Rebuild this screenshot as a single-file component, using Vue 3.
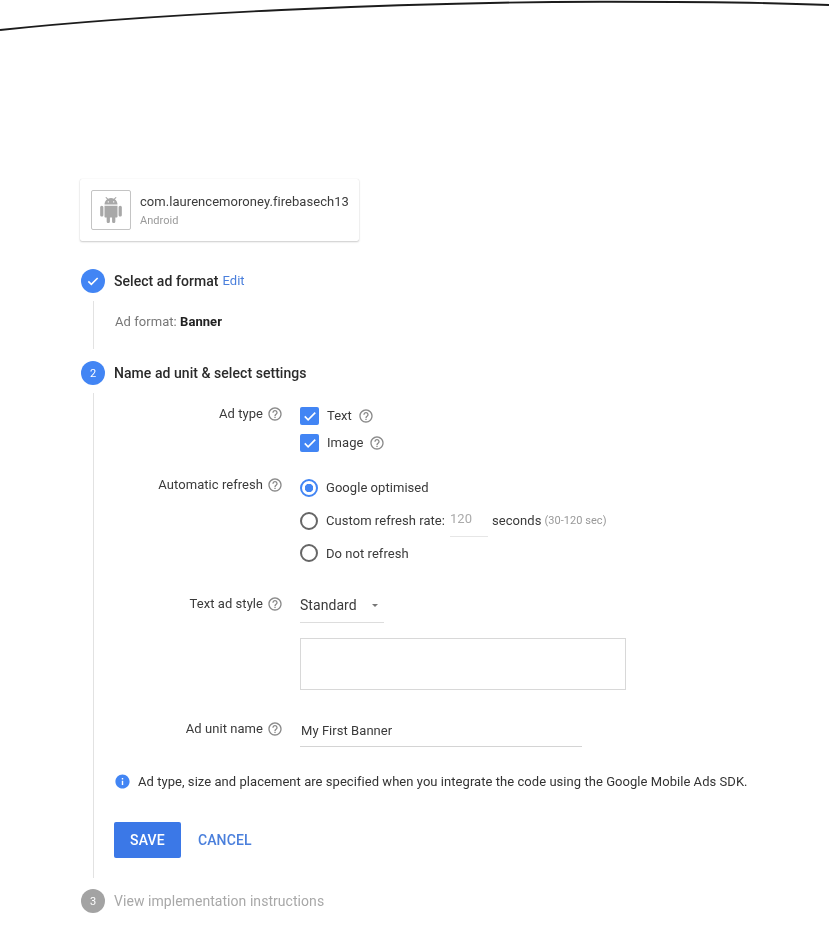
<script setup>
// material icon paths
const helpPath = 'M11 18h2v-2h-2v2zm1-16C6.48 2 2 6.48 2 12s4.48 10 10 10 10-4.48 10-10S17.52 2 12 2zm0 18c-4.41 0-8-3.59-8-8s3.59-8 8-8 8 3.59 8 8-3.59 8-8 8zm0-14c-2.21 0-4 1.79-4 4h2c0-1.1.9-2 2-2s2 .9 2 2c0 2-3 1.75-3 5h2c0-2.25 3-2.5 3-5 0-2.21-1.79-4-4-4z'
const androidPath = 'M6 18c0 .55.45 1 1 1h1v3.5c0 .83.67 1.5 1.5 1.5s1.5-.67 1.5-1.5V19h2v3.5c0 .83.67 1.5 1.5 1.5s1.5-.67 1.5-1.5V19h1c.55 0 1-.45 1-1V8H6v10zM3.5 8C2.67 8 2 8.67 2 9.5v7c0 .83.67 1.5 1.5 1.5S5 17.33 5 16.5v-7C5 8.67 4.33 8 3.5 8zm17 0c-.83 0-1.5.67-1.5 1.5v7c0 .83.67 1.5 1.5 1.5s1.5-.67 1.5-1.5v-7c0-.83-.67-1.5-1.5-1.5zm-4.97-5.84l1.3-1.3c.2-.2.2-.51 0-.71-.2-.2-.51-.2-.71 0l-1.48 1.48C13.85 1.23 12.95 1 12 1c-.96 0-1.86.23-2.66.63L7.85.15c-.2-.2-.51-.2-.71 0-.2.2-.2.51 0 .71l1.31 1.31C6.97 3.26 6 5.01 6 7h12c0-1.99-.97-3.75-2.47-4.84zM10 5H9V4h1v1zm5 0h-1V4h1v1z'
const infoPath = 'M12 2C6.48 2 2 6.48 2 12s4.48 10 10 10 10-4.48 10-10S17.52 2 12 2zm1 15h-2v-6h2v6zm0-8h-2V7h2v2z'
const checkPath = 'M5 12.5l4.5 4.5L19 7.5'
</script>

<template>
  <div class="page">
    <!-- page edge curve -->
    <svg class="curve" width="829" height="179" viewBox="0 0 829 179">
      <path d="M0 30 C150 14 400 2 600 1.7 C700 1.6 780 3 829 5" fill="none" stroke="#1c1c1c" stroke-width="1.9" />
    </svg>

    <div class="app-card">
      <div class="app-icon">
        <svg width="26" height="26" viewBox="0 0 24 24"><path :d="androidPath" fill="#a8a8a8" /></svg>
      </div>
      <div>
        <div class="app-name">com.laurencemoroney.firebasech13</div>
        <div class="app-platform">Android</div>
      </div>
    </div>

    <div class="stepper">
      <div class="step-head">
        <span class="step-num">
          <svg width="16" height="16" viewBox="0 0 24 24"><path :d="checkPath" fill="none" stroke="#fff" stroke-width="2.4" /></svg>
        </span>
        <span class="step-title">Select ad format</span>
        <a class="edit">Edit</a>
      </div>
      <div class="step-body first">
        <span class="format-label">Ad format:</span> <b class="format-value">Banner</b>
      </div>

      <div class="step-head">
        <span class="step-num">2</span>
        <span class="step-title">Name ad unit &amp; select settings</span>
      </div>
      <div class="step-body second">
        <div class="form-row">
          <div class="form-label top">Ad type
            <svg class="help" viewBox="0 0 24 24"><path :d="helpPath" /></svg>
          </div>
          <div>
            <div class="option check-opt">
              <span class="checkbox"><svg width="18" height="18" viewBox="0 0 24 24"><path :d="checkPath" fill="none" stroke="#fff" stroke-width="2.2" /></svg></span>
              <span class="check-text">Text</span>
              <svg class="help" viewBox="0 0 24 24"><path :d="helpPath" /></svg>
            </div>
            <div class="option check-opt">
              <span class="checkbox"><svg width="18" height="18" viewBox="0 0 24 24"><path :d="checkPath" fill="none" stroke="#fff" stroke-width="2.2" /></svg></span>
              <span class="check-text">Image</span>
              <svg class="help" viewBox="0 0 24 24"><path :d="helpPath" /></svg>
            </div>
          </div>
        </div>

        <div class="form-row refresh">
          <div class="form-label">Automatic refresh
            <svg class="help" viewBox="0 0 24 24"><path :d="helpPath" /></svg>
          </div>
          <div>
            <div class="option radio-opt">
              <span class="radio on"></span>
              <span>Google optimised</span>
            </div>
            <div class="option radio-opt">
              <span class="radio"></span>
              <span>Custom refresh rate:</span>
              <span class="rate">120</span>
              <span class="seconds">seconds</span>
              <span class="range">(30-120 sec)</span>
            </div>
            <div class="option radio-opt last">
              <span class="radio"></span>
              <span>Do not refresh</span>
            </div>
          </div>
        </div>

        <div class="form-row style-row">
          <div class="form-label">Text ad style
            <svg class="help" viewBox="0 0 24 24"><path :d="helpPath" /></svg>
          </div>
          <div>
            <div class="select">
              <span>Standard</span>
              <span class="caret"></span>
            </div>
            <div class="preview"></div>
          </div>
        </div>

        <div class="form-row name-row">
          <div class="form-label">Ad unit name
            <svg class="help" viewBox="0 0 24 24"><path :d="helpPath" /></svg>
          </div>
          <div class="name-input">My First Banner</div>
        </div>

        <div class="notice">
          <svg width="17" height="17" viewBox="0 0 24 24"><path :d="infoPath" fill="#4285f4" /></svg>
          <span>Ad type, size and placement are specified when you integrate the code using the Google Mobile Ads SDK.</span>
        </div>

        <div class="actions">
          <button class="save">SAVE</button>
          <a class="cancel">CANCEL</a>
        </div>
      </div>

      <div class="step-head disabled">
        <span class="step-num">3</span>
        <span class="step-title">View implementation instructions</span>
      </div>
    </div>
  </div>
</template>

<style scoped>
.page {
  width: 829px;
  height: 935px;
  overflow: hidden;
  background: #fff;
  font-family: Roboto, "Liberation Sans", sans-serif;
  font-size: 13px;
  letter-spacing: 0.05px;
  color: #333;
  filter: blur(0.4px);
}

.curve {
  display: block;
}

.app-card {
  display: flex;
  align-items: center;
  gap: 9px;
  box-sizing: border-box;
  width: 279px;
  height: 62px;
  margin-left: 80px;
  padding-left: 11px;
  border-radius: 2px;
  box-shadow: 0 1px 2px rgba(0, 0, 0, 0.2), 0 0 1px rgba(0, 0, 0, 0.15);
}

.app-icon {
  display: flex;
  flex: none;
  align-items: center;
  justify-content: center;
  box-sizing: border-box;
  width: 40px;
  height: 40px;
  border: 1px solid #c4c4c4;
  border-radius: 2px;
}

.app-name {
  font-size: 13px;
  line-height: 18px;
  color: #3c3c3c;
}

.app-platform {
  margin-top: 3px;
  font-size: 11px;
  line-height: 14px;
  color: #9a9a9a;
}

.stepper {
  margin-top: 28px;
  margin-left: 81px;
}

.step-head {
  display: flex;
  align-items: center;
  height: 24px;
}

.step-num {
  display: flex;
  align-items: center;
  justify-content: center;
  width: 24px;
  height: 24px;
  margin-right: 9px;
  border-radius: 50%;
  background: #4285f4;
  color: #fff;
  font-size: 11px;
}

.step-title {
  font-size: 14px;
  font-weight: 500;
  color: #2a2a2a;
}

.edit {
  margin-left: 4px;
  color: #4a7fdc;
  font-size: 13px;
  position: relative;
  top: -1px;
}

.disabled .step-num {
  background: #a3a3a3;
}

.disabled .step-title {
  font-weight: 400;
  color: #a8a8a8;
}

.step-body {
  margin-left: 12px;
  border-left: 1.5px solid #e2e2e2;
}

.step-body.first {
  box-sizing: border-box;
  height: 48px;
  margin-top: 8px;
  margin-bottom: 12px;
  padding: 12px 0 0 21px;
  line-height: 18px;
}

.format-label {
  color: #777;
}

.format-value {
  font-weight: 700;
  color: #222;
}

.step-body.second {
  box-sizing: border-box;
  margin-top: 8px;
  margin-bottom: 11px;
  padding: 9px 0 20px 0;
}

.form-row {
  display: grid;
  grid-template-columns: 189px auto;
  column-gap: 17px;
  align-items: start;
}

.form-label {
  display: flex;
  align-items: center;
  justify-content: flex-end;
  gap: 4px;
  padding-top: 4px;
  line-height: 20px;
  color: #3a3a3a;
}

.form-label.top {
  padding-top: 2px;
}

.style-row .form-label {
  padding-top: 6px;
}

.help {
  flex: none;
  width: 16px;
  height: 16px;
  fill: #8a8a8a;
}

.option {
  display: flex;
  align-items: center;
  color: #3a3a3a;
}

.check-opt {
  height: 27px;
}

.checkbox {
  display: flex;
  align-items: center;
  justify-content: center;
  width: 19px;
  height: 18px;
  margin-right: 8px;
  border-radius: 2px;
  background: #4285f4;
}

.check-text {
  margin-right: 6px;
}

.refresh {
  margin-top: 15px;
}

.radio-opt {
  height: 33px;
}

.radio-opt.last {
  height: 32px;
}

.radio {
  box-sizing: border-box;
  width: 18px;
  height: 18px;
  margin-right: 8px;
  border: 2px solid #666;
  border-radius: 50%;
}

.radio.on {
  border-color: #4285f4;
  background: radial-gradient(circle, #4285f4 0 4px, #fff 4.5px);
}

.rate {
  box-sizing: border-box;
  width: 38px;
  height: 32px;
  margin: 0 4px 0 5px;
  padding-top: 6px;
  border-bottom: 1px solid #e6e6e6;
  color: #aaa;
}

.seconds {
  margin-right: 3px;
}

.range {
  font-size: 11px;
  color: #999;
}

.style-row {
  margin-top: 19px;
}

.select {
  display: flex;
  align-items: center;
  box-sizing: border-box;
  width: 84px;
  height: 35px;
  border-bottom: 1px solid #ddd;
  font-size: 14px;
  color: #3a3a3a;
}

.caret {
  width: 0;
  height: 0;
  margin-left: 15px;
  border-left: 3px solid transparent;
  border-right: 3px solid transparent;
  border-top: 3.5px solid #777;
}

.preview {
  box-sizing: border-box;
  width: 326px;
  height: 52px;
  margin-top: 15px;
  border: 1px solid #d8d8d8;
}

.name-row {
  margin-top: 25px;
}

.name-input {
  box-sizing: border-box;
  width: 282px;
  height: 32px;
  padding: 7px 0 0 1px;
  border-bottom: 1px solid #d4d4d4;
  line-height: 18px;
  color: #3a3a3a;
}

.notice {
  display: flex;
  align-items: center;
  gap: 7px;
  height: 18px;
  margin-top: 25px;
  margin-left: 20px;
  color: #333;
}

.actions {
  display: flex;
  align-items: center;
  margin-top: 32px;
  margin-left: 20px;
}

.save {
  width: 67px;
  height: 36px;
  border: 0;
  border-radius: 2px;
  background: #3b78e7;
  color: #fff;
  font-family: inherit;
  font-size: 14px;
  font-weight: 500;
  letter-spacing: 0.2px;
}

.cancel {
  margin-left: 17px;
  color: #4a7fdc;
  font-size: 14px;
  font-weight: 500;
  letter-spacing: 0.1px;
}
</style>
